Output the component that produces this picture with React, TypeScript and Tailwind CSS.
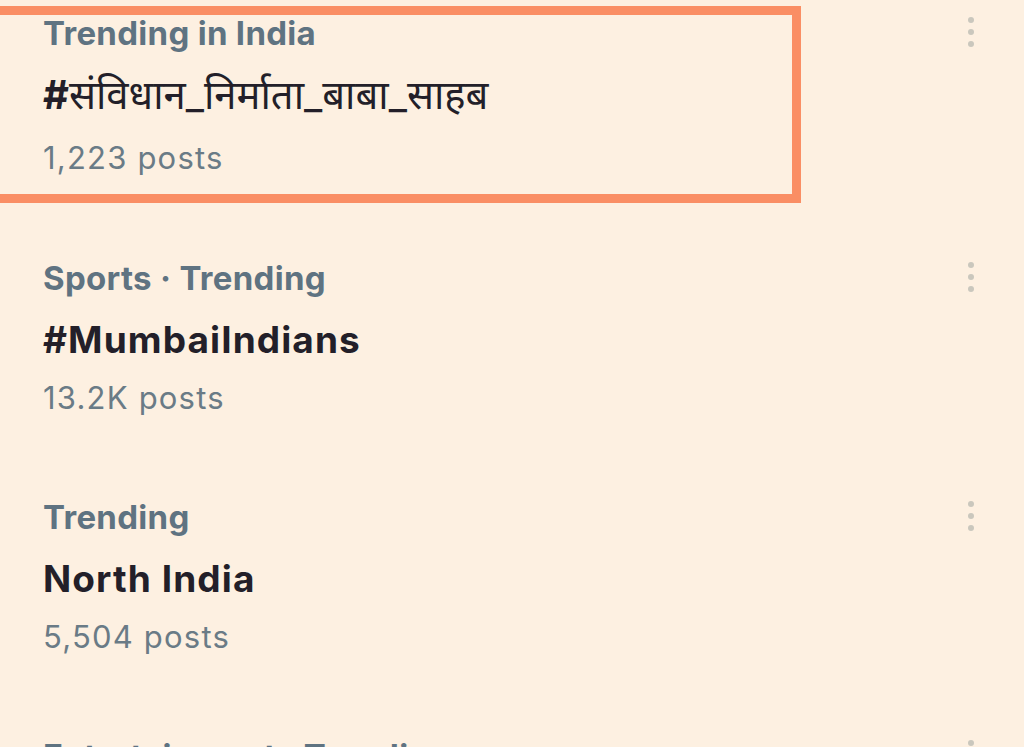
const trends = [
  { category: 'Trending in India', title: '#संविधान_निर्माता_बाबा_साहब', posts: '1,223 posts', hindi: true },
  { category: 'Sports · Trending', title: '#MumbaiIndians', posts: '13.2K posts' },
  { category: 'Trending', title: 'North India', posts: '5,504 posts' },
  { category: 'Entertainment · Trending', title: '', posts: '' },
];

function MoreDots() {
  return (
    <div className="flex flex-col items-center gap-[6px] pt-[17px]">
      <span className="w-[6px] h-[6px] rounded-full bg-[#cac7bd]" />
      <span className="w-[6px] h-[6px] rounded-full bg-[#cac7bd]" />
      <span className="w-[6px] h-[6px] rounded-full bg-[#cac7bd]" />
    </div>
  );
}

export default function App() {
  return (
    <div
      className="relative w-[1024px] h-[747px] overflow-hidden bg-[#fdf0e1]"
      style={{ fontFamily: 'Inter, "Noto Sans", sans-serif' }}
    >
      {/* highlight box */}
      <div className="absolute left-[-20px] top-[6px] w-[821px] h-[197px] border-[9px] border-[#fa8e64] pointer-events-none" />

      <div className="flex flex-col pl-[43px] pr-[50px]">
        {trends.map((t) => (
          <div key={t.category} className={`flex justify-between ${t.hindi ? 'h-[245px]' : 'h-[239px]'}`}>
            <div className="flex flex-col">
              <p className="mt-[12px] text-[33px] leading-[42px] font-bold tracking-[0.3px] text-[#5f7381]">{t.category}</p>
              {t.hindi ? (
                <p className="mt-[18px] text-[40px] leading-[46px] text-[#231f29]">
                  <span className="font-bold">#</span>
                  <span className="font-normal">संविधान_निर्माता_बाबा_साहब</span>
                </p>
              ) : (
                <p className="mt-[18px] text-[37px] leading-[46px] font-bold tracking-[1.1px] text-[#231f29]">{t.title}</p>
              )}
              <p className={`${t.hindi ? 'mt-[20px]' : 'mt-[15px]'} text-[31px] leading-[40px] tracking-[1.2px] text-[#6a7b86]`}>
                {t.posts}
              </p>
            </div>
            <MoreDots />
          </div>
        ))}
      </div>
    </div>
  );
}
